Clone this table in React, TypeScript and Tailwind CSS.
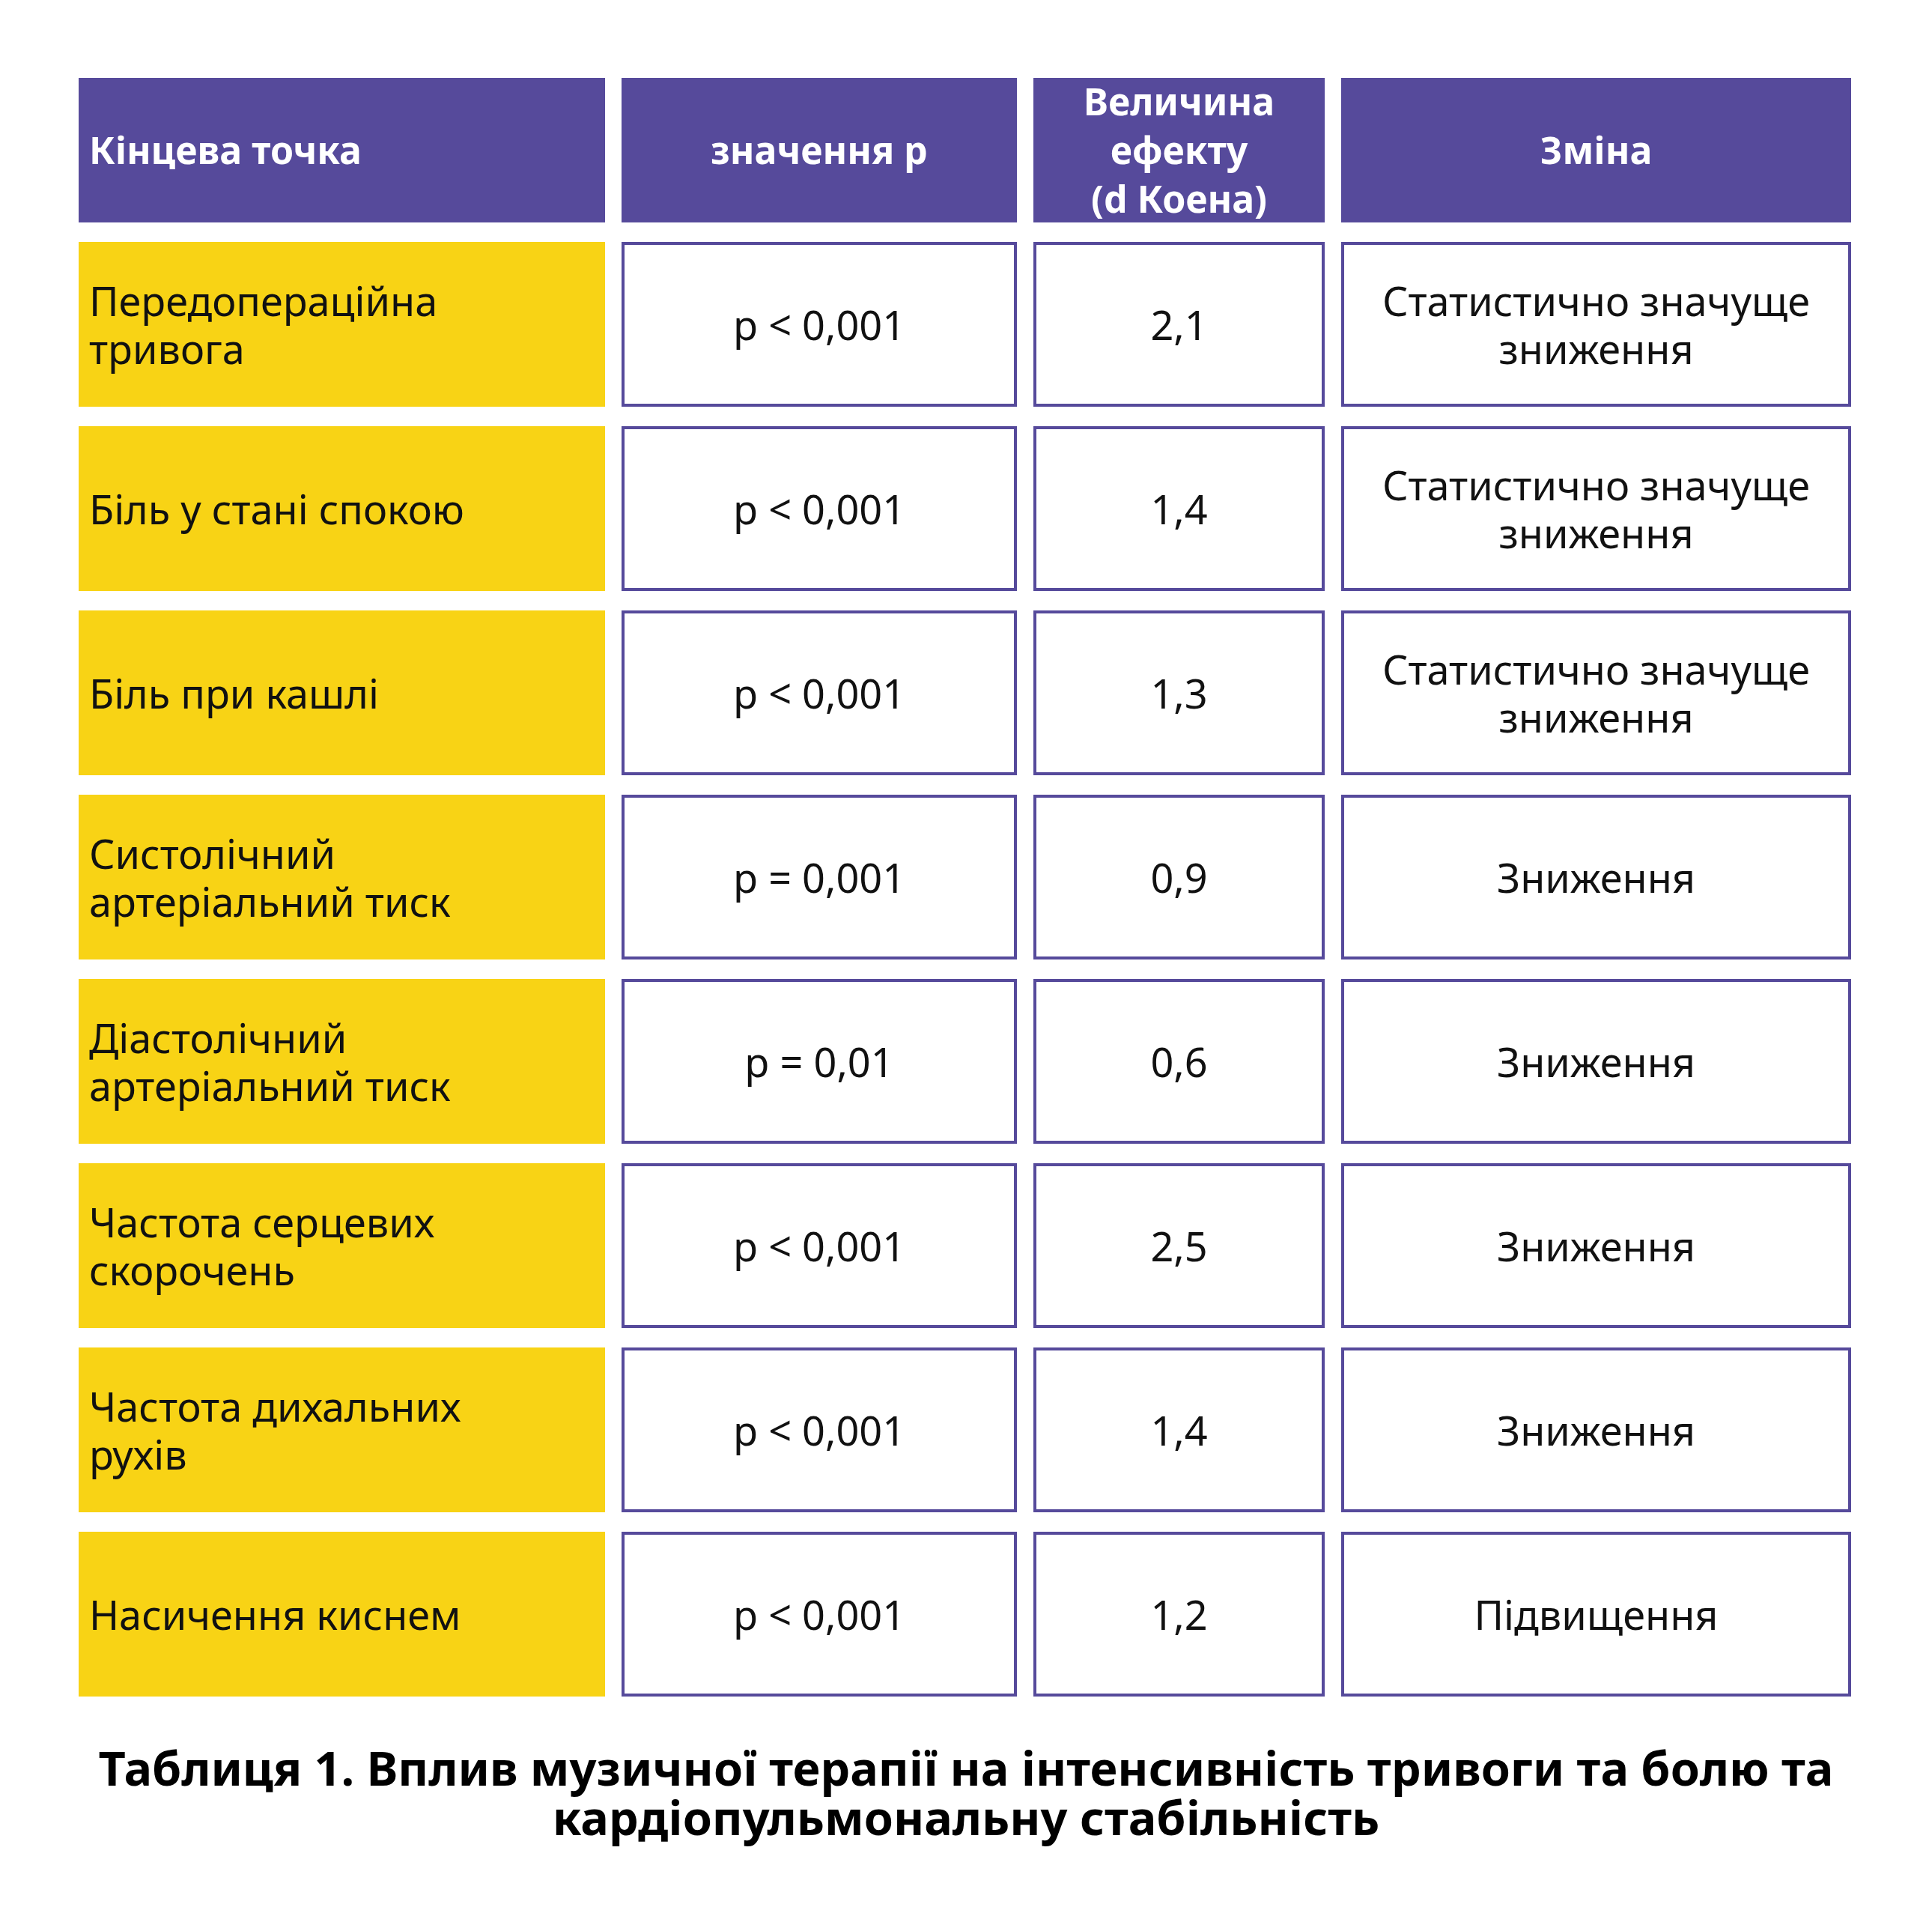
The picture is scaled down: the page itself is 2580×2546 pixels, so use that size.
const rows = [
  { name: "Передопераційна тривога", p: "p < 0,001", d: "2,1", change: "Статистично значуще зниження" },
  { name: "Біль у стані спокою", p: "p < 0,001", d: "1,4", change: "Статистично значуще зниження" },
  { name: "Біль при кашлі", p: "p < 0,001", d: "1,3", change: "Статистично значуще зниження" },
  { name: "Систолічний артеріальний тиск", p: "p = 0,001", d: "0,9", change: "Зниження" },
  { name: "Діастолічний артеріальний тиск", p: "p = 0,01", d: "0,6", change: "Зниження" },
  { name: "Частота серцевих скорочень", p: "p < 0,001", d: "2,5", change: "Зниження" },
  { name: "Частота дихальних рухів", p: "p < 0,001", d: "1,4", change: "Зниження" },
  { name: "Насичення киснем", p: "p < 0,001", d: "1,2", change: "Підвищення" },
];

export default function App() {
  return (
    <div className="w-[2580px] h-[2546px] bg-white font-['Noto_Sans',sans-serif] text-[#111]">
      <div className="pt-[104px] pl-[105px]">
        <div className="grid grid-cols-[703px_528px_389px_681px] grid-rows-[193px] auto-rows-[220px] gap-x-[22px] gap-y-[26px]">
          {/* header */}
          <div className="bg-[#564a9b] text-white font-bold text-[50px] leading-[65px] flex items-center pl-[14px]">
            Кінцева точка
          </div>
          <div className="bg-[#564a9b] text-white font-bold text-[50px] leading-[65px] flex items-center justify-center">
            значення p
          </div>
          <div className="bg-[#564a9b] text-white font-bold text-[50px] leading-[65px] flex items-center justify-center text-center">
            Величина
            <br />
            ефекту
            <br />
            (d Коена)
          </div>
          <div className="bg-[#564a9b] text-white font-bold text-[50px] leading-[65px] flex items-center justify-center">
            Зміна
          </div>

          {/* rows */}
          {rows.map((r) => (
            <>
              <div key={r.name + "n"} className="bg-[#f8d315] text-[54px] leading-[64px] flex items-center pl-[14px] pr-[150px]">
                {r.name}
              </div>
              <div key={r.name + "p"} className="border-[4px] border-[#564a9b] text-[54px] leading-[64px] flex items-center justify-center">
                {r.p}
              </div>
              <div key={r.name + "d"} className="border-[4px] border-[#564a9b] text-[54px] leading-[64px] flex items-center justify-center">
                {r.d}
              </div>
              <div key={r.name + "c"} className="border-[4px] border-[#564a9b] text-[54px] leading-[64px] flex items-center justify-center text-center px-[40px]">
                {r.change}
              </div>
            </>
          ))}
        </div>
      </div>

      <p className="mt-[62px] text-center font-bold text-[63px] leading-[66px] text-black px-[60px]">
        Таблиця 1. Вплив музичної терапії на інтенсивність тривоги та болю та кардіопульмональну стабільність
      </p>
    </div>
  );
}
